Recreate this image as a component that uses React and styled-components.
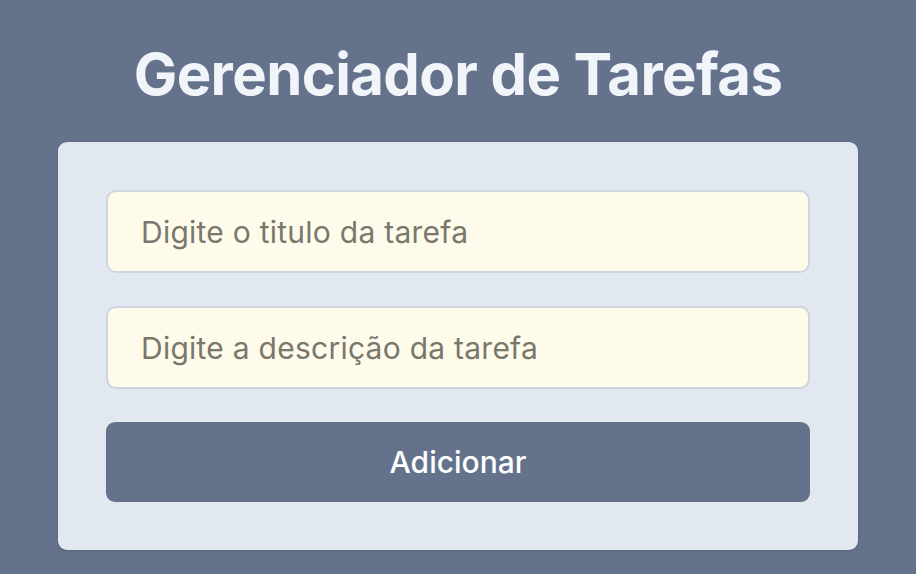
import styled, { createGlobalStyle } from "styled-components";

const GlobalStyle = createGlobalStyle`
  * {
    box-sizing: border-box;
  }
  body {
    margin: 0;
    background: #64728c;
    font-family: Inter, "Noto Sans", sans-serif;
  }
`;

const Page = styled.main`
  display: flex;
  flex-direction: column;
  align-items: center;
  padding-top: 35px;
  min-height: 574px;
`;

const Title = styled.h1`
  margin: 0 0 28px;
  color: #f1f5f9;
  font-size: 58px;
  font-weight: 700;
  line-height: 79px;
  letter-spacing: -0.6px;
`;

const Card = styled.form`
  width: 800px;
  padding: 48px;
  background: #e2e8f0;
  border-radius: 9px;
  box-shadow: 0 1px 3px rgba(0, 0, 0, 0.15);
  display: flex;
  flex-direction: column;
  gap: 33px;
`;

const Input = styled.input`
  width: 100%;
  height: 83px;
  padding: 0 33px;
  background: #fefbeb;
  border: 2px solid #cdd5e2;
  border-radius: 10px;
  font-family: inherit;
  font-size: 30px;
  letter-spacing: 0.25px;
  color: #334155;
  outline: none;

  &::placeholder {
    color: #7a776c;
  }
`;

const Button = styled.button`
  height: 80px;
  border: none;
  border-radius: 9px;
  background: #64728c;
  color: #ffffff;
  font-family: inherit;
  font-size: 30px;
  font-weight: 500;
  cursor: pointer;
`;

const App = () => {
  return (
    <>
      <GlobalStyle />
      <Page>
        <Title>Gerenciador de Tarefas</Title>
        <Card onSubmit={(e) => e.preventDefault()}>
          <Input placeholder="Digite o titulo da tarefa" />
          <Input placeholder="Digite a descrição da tarefa" />
          <Button type="submit">Adicionar</Button>
        </Card>
      </Page>
    </>
  );
};

export default App;
